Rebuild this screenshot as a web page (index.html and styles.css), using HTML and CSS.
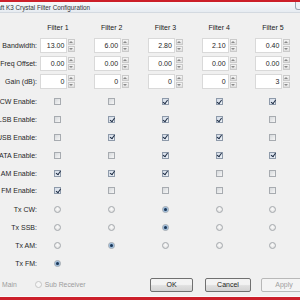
FILE: index.html
```html
<!DOCTYPE html>
<html lang="en">
<head>
    <meta charset="UTF-8">
    <title>Elecraft K3 Crystal Filter Configuration</title>
    <link rel="stylesheet" href="styles.css">
</head>
<body>
<div class="window">
    <div class="titlebar">
        <span class="title">Elecraft K3 Crystal Filter Configuration</span>
        <span class="winbtn"></span>
    </div>

    <div class="row head">
        <span></span>
        <span class="cell">Filter 1</span>
        <span class="cell">Filter 2</span>
        <span class="cell">Filter 3</span>
        <span class="cell">Filter 4</span>
        <span class="cell">Filter 5</span>
    </div>

    <div class="row">
        <span class="lbl">Bandwidth:</span>
        <span class="cell"><span class="spin"><span class="val">13.00</span><span class="arrows"><i class="up"></i><i class="dn"></i></span></span></span>
        <span class="cell"><span class="spin"><span class="val">6.00</span><span class="arrows"><i class="up"></i><i class="dn"></i></span></span></span>
        <span class="cell"><span class="spin"><span class="val">2.80</span><span class="arrows"><i class="up"></i><i class="dn"></i></span></span></span>
        <span class="cell"><span class="spin"><span class="val">2.10</span><span class="arrows"><i class="up"></i><i class="dn"></i></span></span></span>
        <span class="cell"><span class="spin"><span class="val">0.40</span><span class="arrows"><i class="up"></i><i class="dn"></i></span></span></span>
    </div>
    <div class="row">
        <span class="lbl">Freq Offset:</span>
        <span class="cell"><span class="spin"><span class="val">0.00</span><span class="arrows"><i class="up"></i><i class="dn"></i></span></span></span>
        <span class="cell"><span class="spin"><span class="val">0.00</span><span class="arrows"><i class="up"></i><i class="dn"></i></span></span></span>
        <span class="cell"><span class="spin"><span class="val">0.00</span><span class="arrows"><i class="up"></i><i class="dn"></i></span></span></span>
        <span class="cell"><span class="spin"><span class="val">0.00</span><span class="arrows"><i class="up"></i><i class="dn"></i></span></span></span>
        <span class="cell"><span class="spin"><span class="val">0.00</span><span class="arrows"><i class="up"></i><i class="dn"></i></span></span></span>
    </div>
    <div class="row">
        <span class="lbl">Gain (dB):</span>
        <span class="cell"><span class="spin"><span class="val">0</span><span class="arrows"><i class="up"></i><i class="dn"></i></span></span></span>
        <span class="cell"><span class="spin"><span class="val">0</span><span class="arrows"><i class="up"></i><i class="dn"></i></span></span></span>
        <span class="cell"><span class="spin"><span class="val">0</span><span class="arrows"><i class="up"></i><i class="dn"></i></span></span></span>
        <span class="cell"><span class="spin"><span class="val">0</span><span class="arrows"><i class="up"></i><i class="dn"></i></span></span></span>
        <span class="cell"><span class="spin"><span class="val">3</span><span class="arrows"><i class="up"></i><i class="dn"></i></span></span></span>
    </div>

    <div class="row chk first">
        <span class="lbl">CW Enable:</span>
        <span class="cell"><span class="cb"></span></span>
        <span class="cell"><span class="cb"></span></span>
        <span class="cell"><span class="cb on"></span></span>
        <span class="cell"><span class="cb on"></span></span>
        <span class="cell"><span class="cb on"></span></span>
    </div>
    <div class="row chk">
        <span class="lbl">LSB Enable:</span>
        <span class="cell"><span class="cb"></span></span>
        <span class="cell"><span class="cb on"></span></span>
        <span class="cell"><span class="cb on"></span></span>
        <span class="cell"><span class="cb on"></span></span>
        <span class="cell"><span class="cb"></span></span>
    </div>
    <div class="row chk">
        <span class="lbl">USB Enable:</span>
        <span class="cell"><span class="cb"></span></span>
        <span class="cell"><span class="cb on"></span></span>
        <span class="cell"><span class="cb on"></span></span>
        <span class="cell"><span class="cb on"></span></span>
        <span class="cell"><span class="cb"></span></span>
    </div>
    <div class="row chk">
        <span class="lbl">DATA Enable:</span>
        <span class="cell"><span class="cb"></span></span>
        <span class="cell"><span class="cb"></span></span>
        <span class="cell"><span class="cb on"></span></span>
        <span class="cell"><span class="cb on"></span></span>
        <span class="cell"><span class="cb on"></span></span>
    </div>
    <div class="row chk">
        <span class="lbl">AM Enable:</span>
        <span class="cell"><span class="cb on"></span></span>
        <span class="cell"><span class="cb on"></span></span>
        <span class="cell"><span class="cb on"></span></span>
        <span class="cell"><span class="cb"></span></span>
        <span class="cell"><span class="cb"></span></span>
    </div>
    <div class="row chk">
        <span class="lbl">FM Enable:</span>
        <span class="cell"><span class="cb on"></span></span>
        <span class="cell"><span class="cb"></span></span>
        <span class="cell"><span class="cb"></span></span>
        <span class="cell"><span class="cb"></span></span>
        <span class="cell"><span class="cb"></span></span>
    </div>

    <div class="row tx first">
        <span class="lbl">Tx CW:</span>
        <span class="cell"><span class="rb"></span></span>
        <span class="cell"><span class="rb"></span></span>
        <span class="cell"><span class="rb on"></span></span>
        <span class="cell"><span class="rb"></span></span>
        <span class="cell"><span class="rb"></span></span>
    </div>
    <div class="row tx">
        <span class="lbl">Tx SSB:</span>
        <span class="cell"><span class="rb"></span></span>
        <span class="cell"><span class="rb"></span></span>
        <span class="cell"><span class="rb on"></span></span>
        <span class="cell"><span class="rb"></span></span>
        <span class="cell"><span class="rb"></span></span>
    </div>
    <div class="row tx">
        <span class="lbl">Tx AM:</span>
        <span class="cell"><span class="rb"></span></span>
        <span class="cell"><span class="rb on"></span></span>
        <span class="cell"><span class="rb"></span></span>
        <span class="cell"><span class="rb"></span></span>
        <span class="cell"><span class="rb"></span></span>
    </div>
    <div class="row tx">
        <span class="lbl">Tx FM:</span>
        <span class="cell"><span class="rb on"></span></span>
    </div>

    <div class="bottom">
        <div class="opts">
            <span class="rb off"></span>
            <span>Main</span>
            <span class="rb off sub"></span>
            <span>Sub Receiver</span>
        </div>
        <span class="btn ok">OK</span>
        <span class="btn cancel">Cancel</span>
        <span class="btn apply">Apply</span>
    </div>

    <div class="edge"></div>
</div>
</body>
</html>
```

FILE: styles.css
```css
* {
    box-sizing: border-box;
}

body {
    margin: 0;
    width: 300px;
    height: 300px;
    overflow: hidden;
    background: #f0f0f0;
    color: #262626;
    font-family: 'Liberation Sans', Arial, sans-serif;
    font-size: 7px;
}

.window {
    position: relative;
    height: 300px;
    display: flex;
    flex-direction: column;
    border-bottom: 3px solid #cc1f2a;
}

.titlebar {
    height: 13px;
    display: flex;
    align-items: center;
    border-top: 2px solid #cc1f2a;
    border-bottom: 1px solid #d3d9e0;
    background: linear-gradient(#f7f9fb, #e6ebf1);
    color: #333;
    font-size: 6.3px;
    white-space: nowrap;
}

.title {
    margin-left: -17px;
}

.winbtn {
    position: absolute;
    left: 295px;
    top: 2px;
    width: 12px;
    height: 8px;
    border: 1px solid #9aa4b0;
    border-top: none;
    border-radius: 0 0 0 3px;
    background: #eef2f6;
}

.row {
    display: grid;
    grid-template-columns: 31px repeat(5, 53.75px);
    align-items: center;
    height: 18px;
}

.head {
    margin-top: 5px;
    color: #1a1a1a;
}

.cell {
    display: flex;
    justify-content: center;
}

.lbl {
    display: flex;
    justify-content: flex-end;
    margin-right: -6px;
    white-space: nowrap;
}

.spin {
    display: flex;
    width: 35px;
    height: 15px;
}

.val {
    flex: 1;
    background: #fff;
    border: 1px solid #d9d9d9;
    text-align: right;
    padding-right: 2px;
    line-height: 13px;
}

.arrows {
    width: 8px;
    display: flex;
    flex-direction: column;
    gap: 1px;
    padding: 1px 0 1px 1px;
}

.arrows i {
    flex: 1;
    position: relative;
    background: linear-gradient(#f5f5f5, #dedede);
    border: 1px solid #cacaca;
}

.arrows i::after {
    content: "";
    position: absolute;
    left: 0;
    top: 1px;
    width: 0;
    height: 0;
    border-left: 2px solid transparent;
    border-right: 2px solid transparent;
}

.arrows .up::after {
    border-bottom: 2px solid #8a8a8a;
}

.arrows .dn::after {
    border-top: 2px solid #8a8a8a;
}

.chk {
    height: 17.8px;
}

.chk.first {
    margin-top: 3px;
}

.tx.first {
    margin-top: 1.2px;
}

.cb {
    position: relative;
    width: 7px;
    height: 7px;
    border: 1px solid #a7abb0;
    background: linear-gradient(135deg, #d6d9dc, #f6f6f6);
}

.cb.on {
    border-color: #8e9aaa;
    background: linear-gradient(135deg, #d4dce8, #eef2f7);
}

.cb.on::after {
    content: "";
    position: absolute;
    left: 1.5px;
    top: -0.5px;
    width: 2px;
    height: 3.5px;
    border: solid #1d2c44;
    border-width: 0 1px 1px 0;
    transform: rotate(35deg);
}

.rb {
    position: relative;
    width: 7px;
    height: 7px;
    border-radius: 50%;
    border: 1px solid #a5a9ad;
    background: radial-gradient(circle at 50% 40%, #fdfdfd, #d9d9d9);
}

.rb.on::after {
    content: "";
    position: absolute;
    left: 1px;
    top: 1px;
    width: 3px;
    height: 3px;
    border-radius: 50%;
    background: #1b3656;
    box-shadow: 0 0 1px 1px #8fb2d6;
}

.rb.off {
    border-color: #c6c6c6;
    background: #f6f6f6;
}

.bottom {
    display: flex;
    align-items: center;
    height: 14px;
    margin-top: 5px;
    width: 320px;
}

.opts {
    display: flex;
    align-items: center;
    gap: 3px;
    width: 158px;
    margin-left: -8px;
    color: #9c9c9c;
    font-size: 6.8px;
}

.opts .sub {
    margin-left: 15px;
}

.btn {
    height: 14px;
    display: flex;
    align-items: center;
    justify-content: center;
    border: 1px solid #707070;
    border-radius: 2px;
    background: linear-gradient(#f3f3f3 45%, #e0e0e0 55%, #d3d3d3);
    color: #222;
}

.ok {
    width: 43px;
}

.cancel {
    width: 46px;
    margin-left: 12px;
}

.apply {
    width: 46px;
    margin-left: 10px;
    border-color: #b8b8b8;
    background: #f4f4f4;
    color: #9f9f9f;
}

.edge {
    margin-top: auto;
    height: 1px;
    background: #fafafa;
}
```
